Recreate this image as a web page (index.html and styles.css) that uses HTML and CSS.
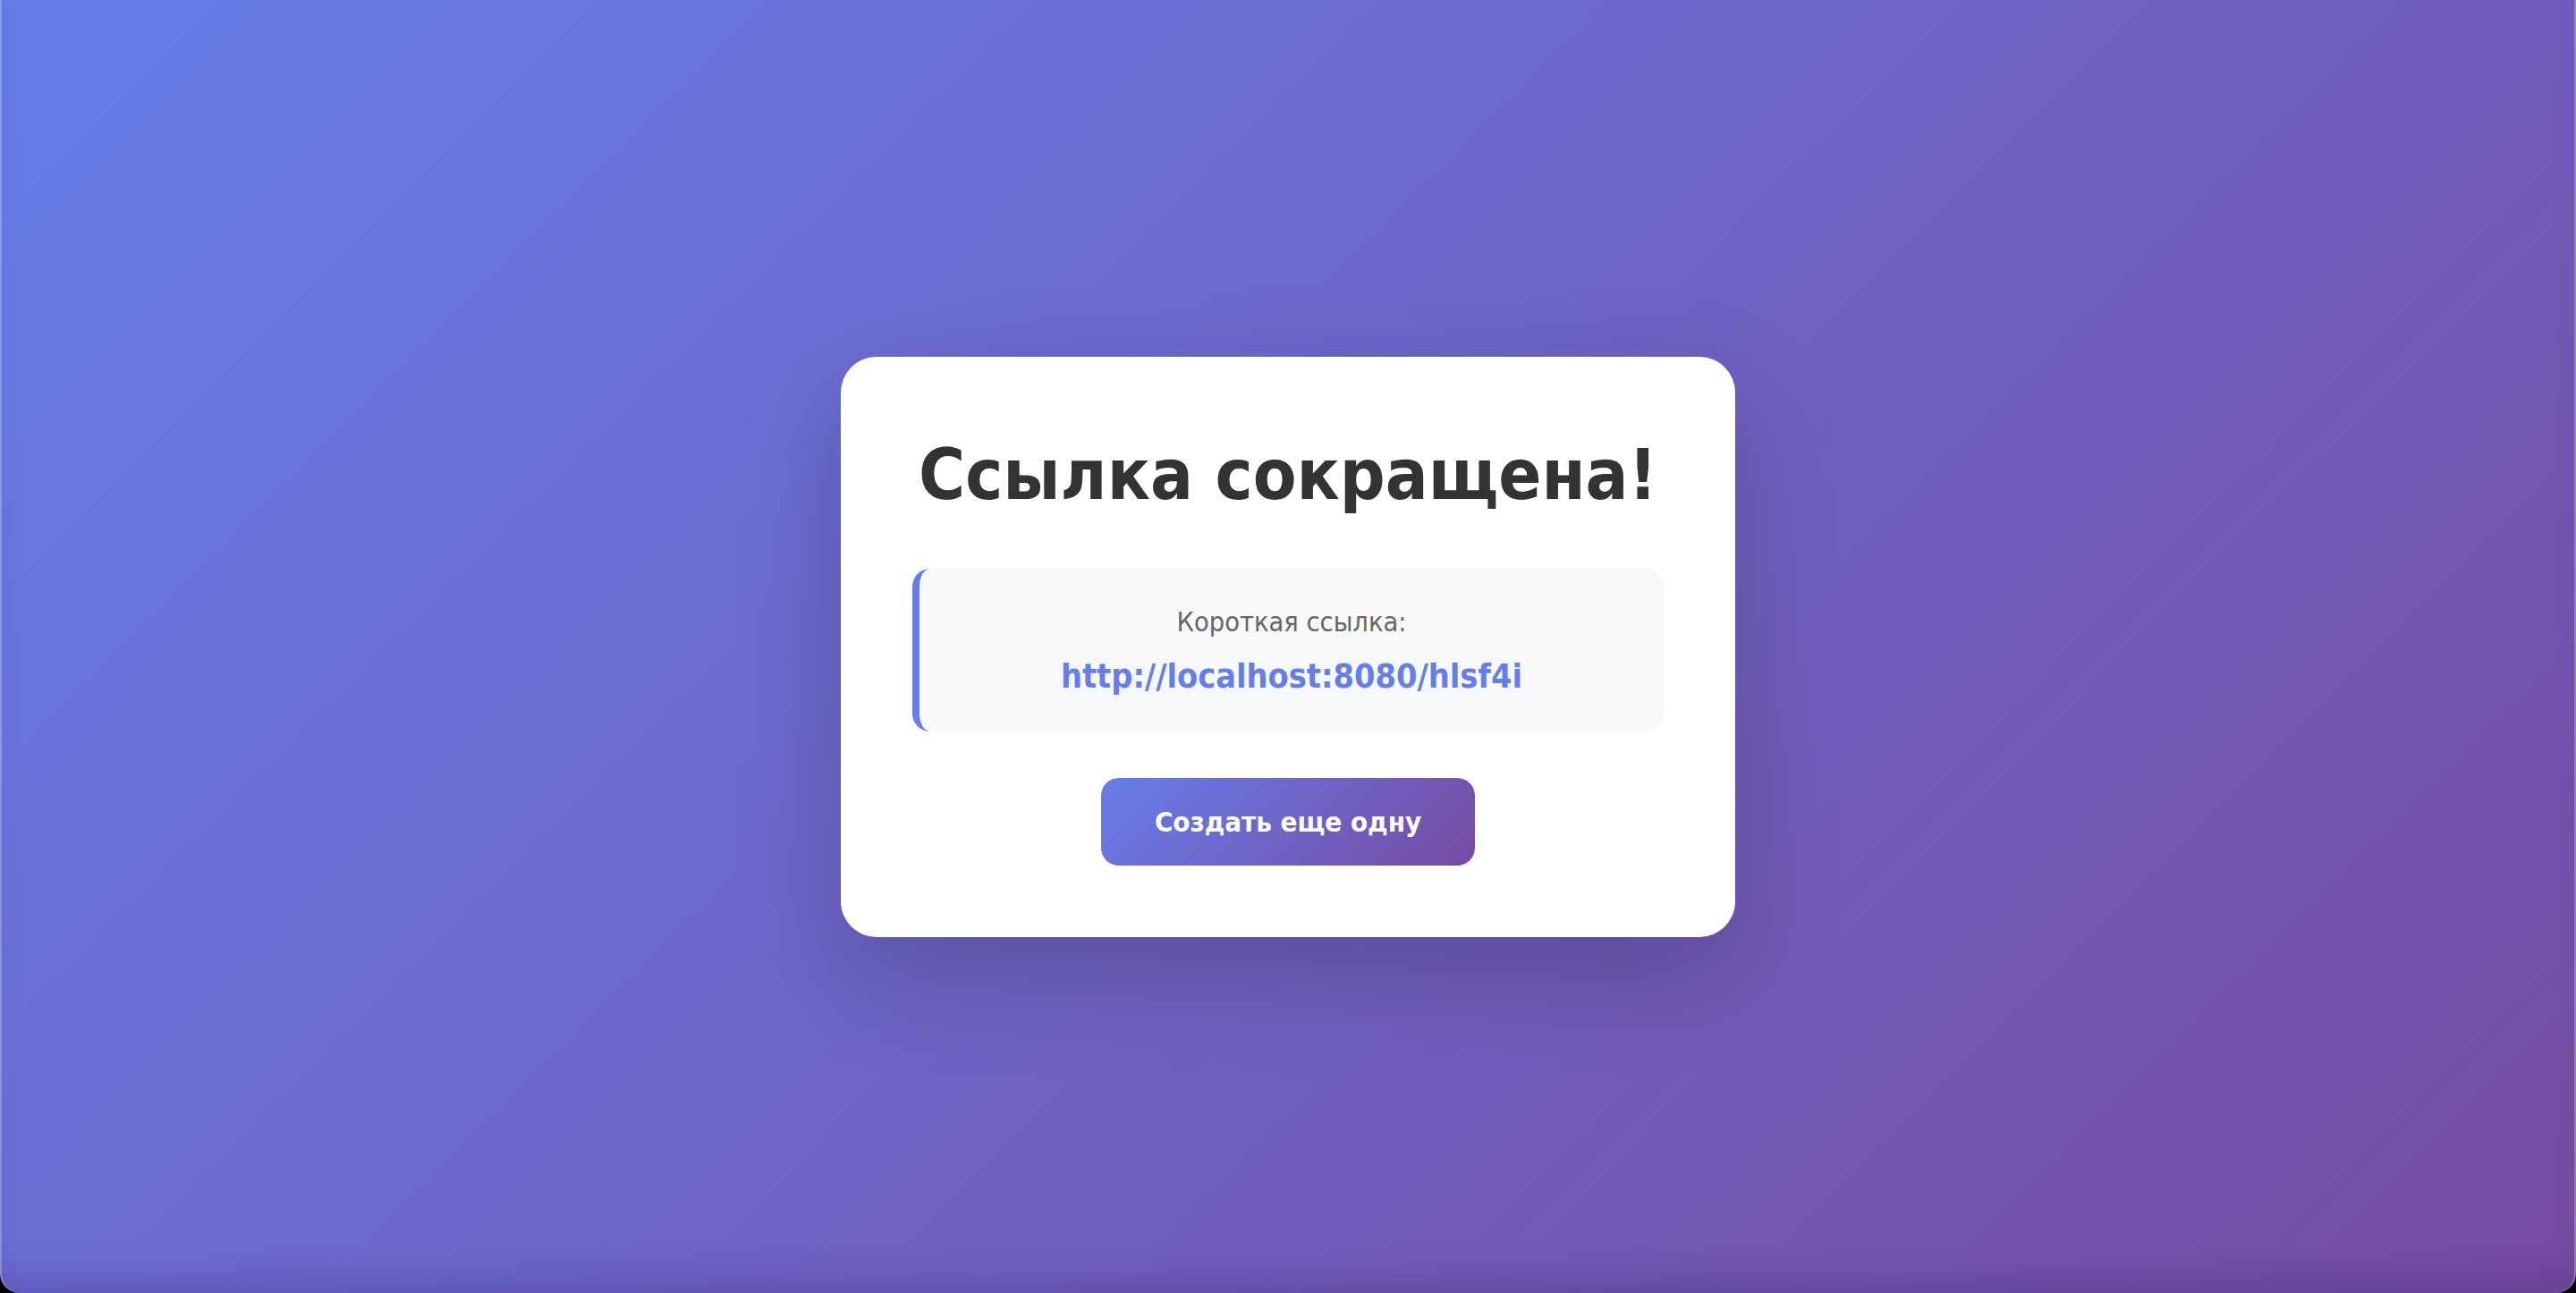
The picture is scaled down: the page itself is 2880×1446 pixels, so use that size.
FILE: index.html
```html
<!DOCTYPE html>
<html lang="ru">
<head>
<meta charset="utf-8">
<title>Ссылка сокращена!</title>
<link rel="stylesheet" href="styles.css">
</head>
<body>
<main class="page">
  <section class="card">
    <h1 class="title">Ссылка сокращена!</h1>
    <div class="result">
      <p class="result-label">Короткая ссылка:</p>
      <a class="result-link" href="#">http://localhost:8080/hlsf4i</a>
    </div>
    <a class="btn" href="#">Создать еще одну</a>
  </section>
</main>
</body>
</html>
```
FILE: styles.css
```css
html {
  margin: 0;
  background: #000;
}
body {
  margin: 0;
  height: 1446px;
  overflow: hidden;
  font-family: "DejaVu Sans Condensed", "DejaVu Sans", "Liberation Sans", sans-serif;
}
.page {
  box-sizing: border-box;
  height: 1446px;
  display: flex;
  align-items: center;
  justify-content: center;
  background: linear-gradient(135deg, #667eea 0%, #764ba2 100%);
  border-radius: 0 0 22px 22px;
  box-shadow: inset 2px 0 0 rgba(255,255,255,0.25), inset -2px 0 0 rgba(255,255,255,0.25), inset 0 -30px 40px -20px rgba(40,20,90,0.25);
}
.card {
  box-sizing: border-box;
  width: 1000px;
  padding: 80px;
  background: #fff;
  border-radius: 40px;
  box-shadow: 0 40px 120px rgba(0,0,0,0.2);
  text-align: center;
  display: flex;
  flex-direction: column;
  align-items: center;
}
.title {
  margin: 0 0 52px;
  font-size: 79px;
  font-weight: bold;
  line-height: 105px;
  color: #333;
}
.result {
  box-sizing: border-box;
  align-self: stretch;
  background: #f7f8fa;
  border-left: 8px solid #667eea;
  border-radius: 20px;
  padding: 40px 40px;
  margin-bottom: 52px;
}
.result-label {
  margin: 0 0 20px;
  font-size: 30.5px;
  line-height: 39px;
  color: #666;
}
.result-link {
  display: block;
  font-size: 37.5px;
  line-height: 43px;
  font-weight: bold;
  color: #667eea;
  text-decoration: none;
}
.btn {
  display: block;
  padding: 30px 60px;
  font-size: 31px;
  line-height: 38px;
  font-weight: bold;
  color: #fff;
  text-decoration: none;
  border-radius: 20px;
  background: linear-gradient(135deg, #667eea 0%, #764ba2 100%);
}
```
